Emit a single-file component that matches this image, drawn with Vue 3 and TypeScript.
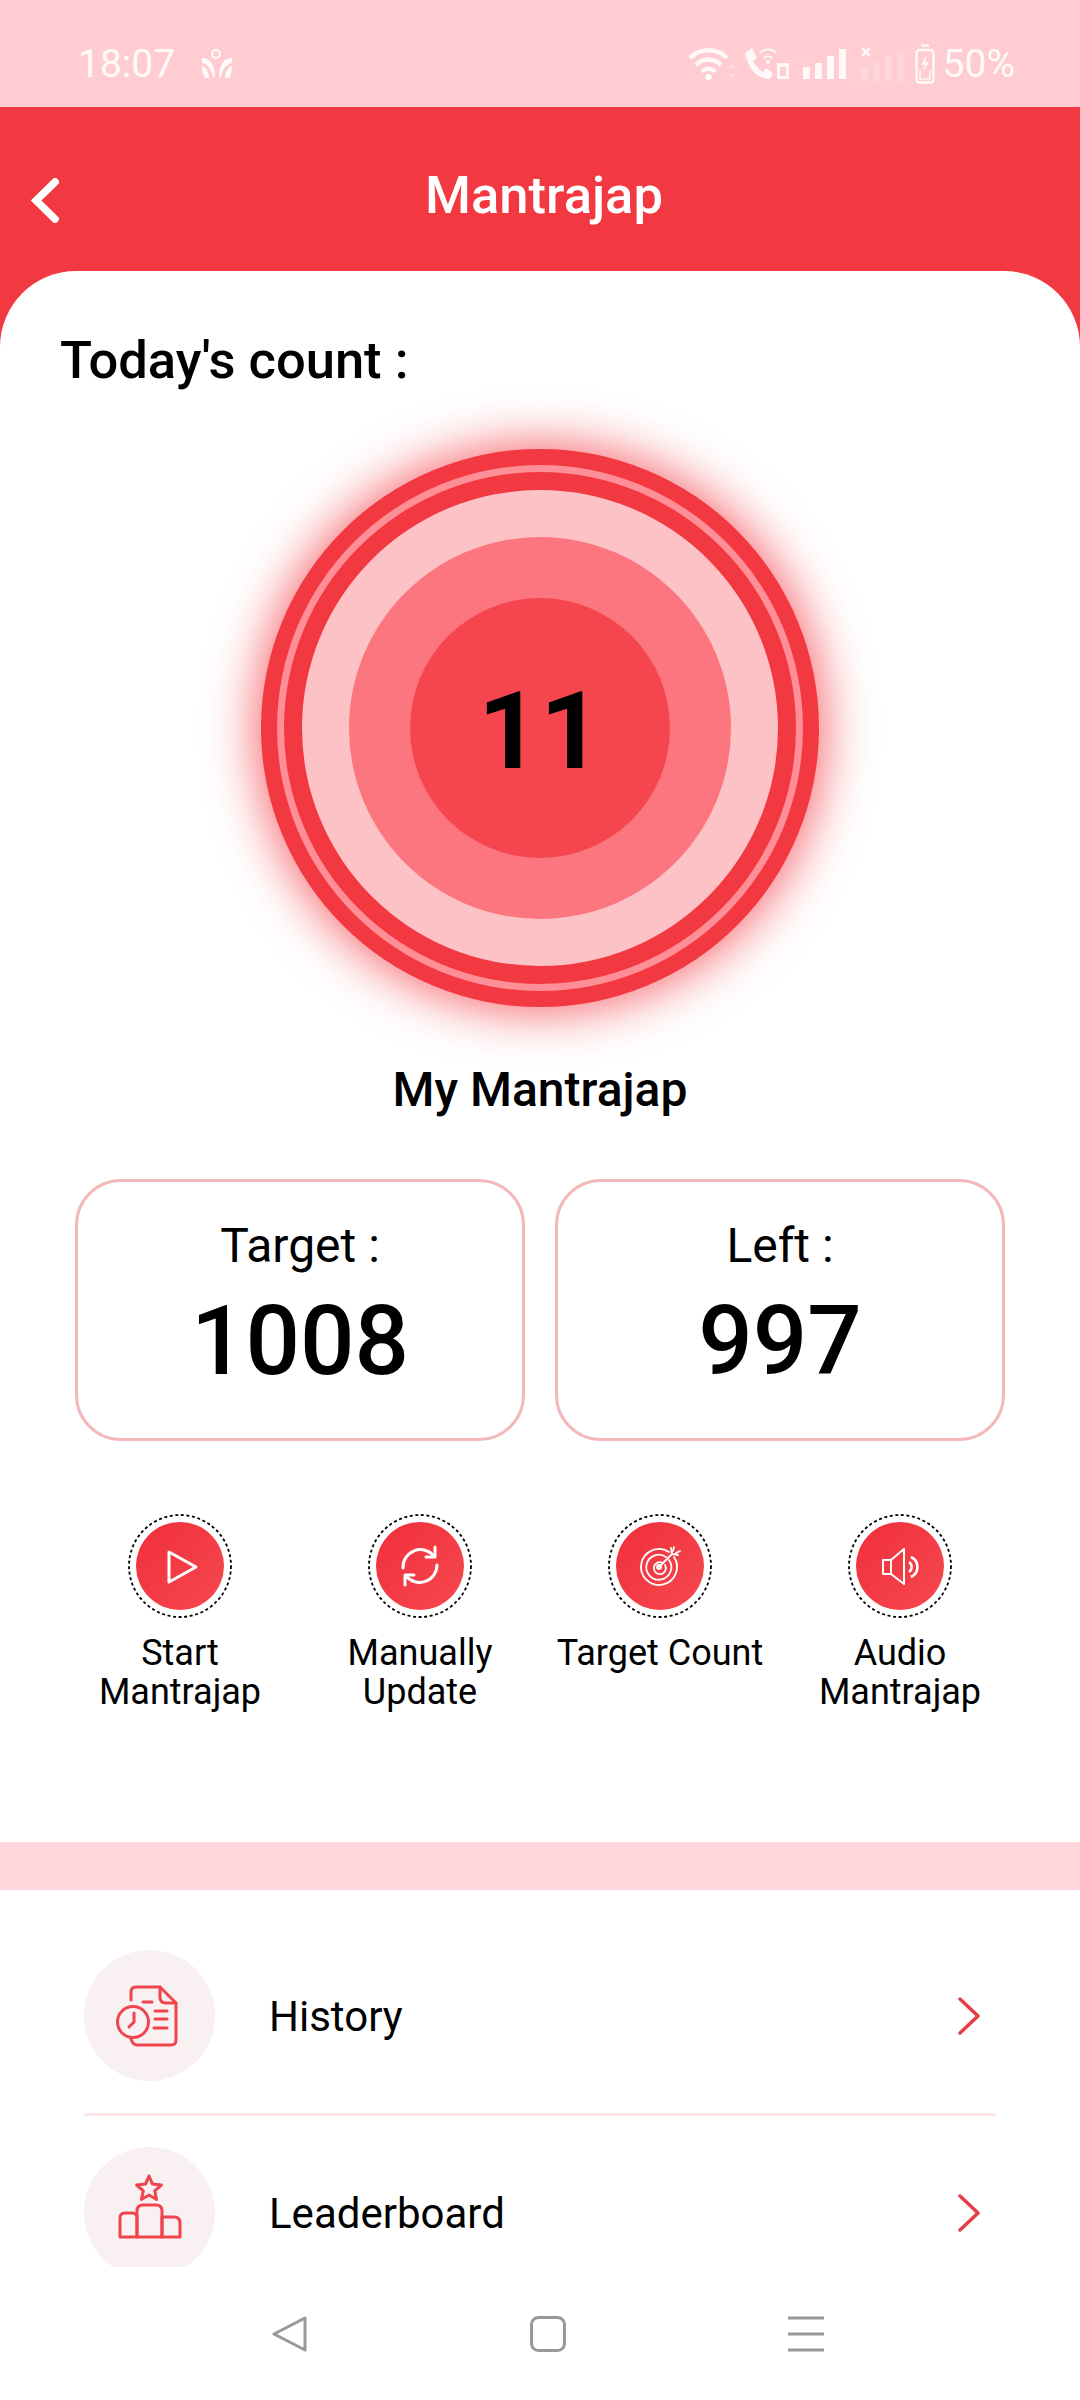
<script setup lang="ts">
const stats: { label: string; value: string }[] = [
  { label: 'Target :', value: '1008' },
  { label: 'Left :', value: '997' },
]
</script>

<template>
  <div class="page">
    <div class="status">
      <span class="time">18:07</span>
      <svg class="logo" width="30" height="29" viewBox="0 0 30 29" fill="#fff" fill-opacity=".92">
        <circle cx="14" cy="5" r="4" fill="none" stroke="#fff" stroke-opacity=".92" stroke-width="2" />
        <path d="M0 9 C8 9 13 16 13 28 H11 C10 21 6 15 0 14Z" />
        <path d="M0 17 C4 18 7 23 7 29 H3 C1 26 0 22 0 17Z" />
        <path d="M30 9 C22 9 17 16 17 28 H19 C20 21 24 15 30 14Z" />
        <path d="M30 17 C26 18 23 23 23 29 H27 C29 26 30 22 30 17Z" />
      </svg>
      <div class="status-right">
        <svg width="47" height="34" viewBox="0 0 47 34" fill="none" stroke="#fff" stroke-opacity=".85">
          <path d="M2 11 A26 26 0 0 1 39 11" stroke-width="4.500" />
          <path d="M8 18 A17 17 0 0 1 33 18" stroke-width="4.500" />
          <path d="M14 25 A8 8 0 0 1 27 25" stroke-width="4" />
          <circle cx="20.500" cy="30" r="3" fill="#fff" stroke="none" />
          <path d="M41 21 l2.500 -3 l2.500 3 M41 27 l2.500 3 l2.500 -3" stroke-width="2" stroke-opacity=".4" />
        </svg>
        <svg class="call" width="46" height="34" viewBox="0 0 46 34" fill="#fff" fill-opacity=".85">
          <path d="M1 6 L8 1 L13 11 L9 14 Q12 21 19 25 L22 21 L29 26 L26 32 Q7 32 1 6Z" />
          <g fill="none" stroke="#fff" stroke-opacity=".85" stroke-width="2">
            <path d="M16 6 A11 11 0 0 1 32 6" />
            <path d="M20 11 A6 6 0 0 1 28 11" />
          </g>
          <circle cx="24" cy="15" r="2" />
          <path fill-rule="evenodd" d="M33 16 H45 V32 H33Z M36 20 V29 H42 V20Z" />
        </svg>
        <svg class="bars" width="43" height="30" viewBox="0 0 43 30" fill="#fff" fill-opacity=".85">
          <rect x="0" y="18" width="7" height="12" />
          <rect x="12" y="14" width="7" height="16" />
          <rect x="24" y="7" width="7" height="23" />
          <rect x="36" y="0" width="7" height="30" />
        </svg>
        <svg class="bars2" width="43" height="34" viewBox="0 0 43 34" fill="#fff">
          <path d="M1 1 L9 9 M9 1 L1 9" stroke="#fff" stroke-opacity=".85" stroke-width="2.500" />
          <g fill-opacity=".22">
            <rect x="0" y="20" width="7" height="14" />
            <rect x="12" y="16" width="7" height="18" />
            <rect x="24" y="9" width="7" height="25" />
            <rect x="36" y="4" width="7" height="30" />
          </g>
        </svg>
        <svg class="batt" width="20" height="40" viewBox="0 0 20 40" fill="none" stroke="#fff" stroke-opacity=".85">
          <path d="M6 1.500 H14" stroke-width="2.500" />
          <rect x="1.500" y="6" width="17" height="32.500" rx="3" stroke-width="2.500" />
          <path d="M12 10 L6 21 H10 L8 28 L14 18 H10Z" fill="#fff" fill-opacity=".85" stroke="none" />
          <path d="M5 26 V35 H15 V26" stroke-width="1.500" />
        </svg>
        <span class="pct">50%</span>
      </div>
    </div>

    <div class="main">
      <header class="header">
        <svg class="back" width="28" height="45" viewBox="0 0 28 45" fill="none" stroke="#fff" stroke-width="7.500" stroke-linecap="square">
          <path d="M24 4 L5 22.500 L24 41" />
        </svg>
        <h1 class="title">Mantrajap</h1>
      </header>

      <section class="sheet">
        <h2 class="today">Today's count :</h2>

        <div class="dial-wrap">
          <div class="dial">
            <div class="ring-light">
              <div class="ring-red">
                <div class="disc-pale">
                  <div class="disc-mid">
                    <div class="disc-core">11</div>
                  </div>
                </div>
              </div>
            </div>
          </div>
        </div>

        <p class="subtitle">My Mantrajap</p>

        <div class="stats">
          <div v-for="s in stats" :key="s.label" class="stat">
            <span class="stat-label">{{ s.label }}</span>
            <span class="stat-value">{{ s.value }}</span>
          </div>
        </div>

        <div class="actions">
          <div class="action">
            <div class="dotted">
              <svg class="dash" width="104" height="104" viewBox="0 0 104 104" fill="none" stroke="#000" stroke-width="1.800" stroke-dasharray="3 2.600">
                <circle cx="52" cy="52" r="51" />
              </svg>
              <div class="disc">
                <svg width="88" height="88" viewBox="0 0 88 88" fill="none" stroke="#fff" stroke-width="3" stroke-linejoin="round">
                  <path d="M33 30 L60 45 L33 60Z" />
                </svg>
              </div>
            </div>
            <span class="action-label">Start<br />Mantrajap</span>
          </div>
          <div class="action">
            <div class="dotted">
              <svg class="dash" width="104" height="104" viewBox="0 0 104 104" fill="none" stroke="#000" stroke-width="1.800" stroke-dasharray="3 2.600">
                <circle cx="52" cy="52" r="51" />
              </svg>
              <div class="disc">
                <svg width="88" height="88" viewBox="0 0 88 88" fill="none" stroke="#fff" stroke-width="3" stroke-linecap="round" stroke-linejoin="round">
                  <path d="M27 46 A17.500 17.500 0 0 1 58 34" />
                  <path d="M59 25 V35 H50" />
                  <path d="M61 43 A17.500 17.500 0 0 1 30 54" />
                  <path d="M29 63 V53 H38" />
                </svg>
              </div>
            </div>
            <span class="action-label">Manually<br />Update</span>
          </div>
          <div class="action">
            <div class="dotted">
              <svg class="dash" width="104" height="104" viewBox="0 0 104 104" fill="none" stroke="#000" stroke-width="1.800" stroke-dasharray="3 2.600">
                <circle cx="52" cy="52" r="51" />
              </svg>
              <div class="disc">
                <svg width="88" height="88" viewBox="0 0 88 88" fill="none" stroke="#fff" stroke-width="1.800" stroke-linecap="round">
                  <path d="M53 30 A18 18 0 1 0 58 35" />
                  <path d="M50 35 A12.500 12.500 0 1 0 53 38" />
                  <path d="M47 41 A6 6 0 1 0 49 43" />
                  <circle cx="43" cy="45" r="2" />
                  <path d="M43 45 L56 32" stroke-width="2" />
                  <path d="M55 26 L56 32 L62 33 M58 25 L57 29 M64 29 L60 31" />
                </svg>
              </div>
            </div>
            <span class="action-label">Target Count</span>
          </div>
          <div class="action">
            <div class="dotted">
              <svg class="dash" width="104" height="104" viewBox="0 0 104 104" fill="none" stroke="#000" stroke-width="1.800" stroke-dasharray="3 2.600">
                <circle cx="52" cy="52" r="51" />
              </svg>
              <div class="disc">
                <svg width="88" height="88" viewBox="0 0 88 88" fill="none" stroke="#fff" stroke-width="2" stroke-linejoin="round">
                  <path d="M27 38 H35 V52 H27Z" />
                  <path d="M35 38 L48 27 V62 L35 52" />
                  <path d="M53 40 A6 6 0 0 1 53 50" stroke-width="2.500" />
                  <path d="M55 35 A11 11 0 0 1 55 55" stroke-width="2.500" />
                </svg>
              </div>
            </div>
            <span class="action-label">Audio<br />Mantrajap</span>
          </div>
        </div>

        <div class="band"></div>

        <div class="list">
          <div class="row">
            <div class="row-icon">
              <svg width="131" height="131" viewBox="0 0 131 131" fill="none" stroke="#f0454f" stroke-width="3" stroke-linecap="round" stroke-linejoin="round">
                <path d="M47 50 V42 Q47 37 52 37 H76 L92 53 V90 Q92 95 87 95 H53 Q49 95 47 89" />
                <path d="M76 37 V47 Q76 53 82 53 H92" />
                <circle cx="49" cy="72" r="15.500" />
                <path d="M50 63 V72 L45 77" />
                <path d="M59 52 H68 M71 61 H83 M71 69 H83 M70 78 H83" />
              </svg>
            </div>
            <span class="row-label">History</span>
            <svg class="row-arrow" width="22" height="38" viewBox="0 0 22 38" fill="none" stroke="#e53e46" stroke-width="3.500" stroke-linecap="round" stroke-linejoin="round">
              <path d="M2 2 L20 19 L2 36" />
            </svg>
          </div>
          <div class="divider"></div>
          <div class="row">
            <div class="row-icon">
              <svg width="131" height="131" viewBox="0 0 131 131" fill="none" stroke="#f0454f" stroke-width="3" stroke-linecap="round" stroke-linejoin="round">
                <path d="M65 29 L68.500 37.100 L77.400 38 L70.700 43.900 L72.600 52.500 L65 48 L57.400 52.500 L59.300 43.900 L52.600 38 L61.500 37.100Z" />
                <path d="M36 90 V71 Q36 66 41 66 H48 Q53 66 53 71 V90Z" />
                <path d="M53 90 V64 Q53 58 59 58 H72 Q78 58 78 64 V90Z" />
                <path d="M78 70 H90 Q96 70 96 76 V90 H78Z" />
              </svg>
            </div>
            <span class="row-label">Leaderboard</span>
            <svg class="row-arrow" width="22" height="38" viewBox="0 0 22 38" fill="none" stroke="#e53e46" stroke-width="3.500" stroke-linecap="round" stroke-linejoin="round">
              <path d="M2 2 L20 19 L2 36" />
            </svg>
          </div>
        </div>
      </section>
    </div>

    <nav class="nav">
      <svg width="36" height="36" viewBox="0 0 36 36" fill="none" stroke="#999" stroke-width="3" stroke-linejoin="round">
        <path d="M2 18 L33 2 V34Z" />
      </svg>
      <svg width="36" height="36" viewBox="0 0 36 36" fill="none" stroke="#999" stroke-width="3">
        <rect x="1.500" y="1.500" width="33" height="33" rx="7" />
      </svg>
      <svg width="36" height="36" viewBox="0 0 36 36" fill="none" stroke="#999" stroke-width="3">
        <path d="M0 2 H36 M0 18 H36 M0 34 H36" />
      </svg>
    </nav>
  </div>
</template>

<style>
html,
body {
  margin: 0;
  background: #fff;
}
</style>

<style scoped>
.page {
  width: 1080px;
  height: 2400px;
  display: flex;
  flex-direction: column;
  overflow: hidden;
  background: #fff;
  font-family: Roboto, "Liberation Sans", sans-serif;
  color: #000;
}
.status {
  height: 107px;
  flex: none;
  background: #ffccd1;
  display: flex;
  align-items: center;
  padding: 20px 65px 0 78px;
  box-sizing: border-box;
  color: rgba(255, 255, 255, 0.92);
}
.time {
  font-size: 39px;
  line-height: 44px;
}
.logo {
  margin-left: 27px;
}
.status-right {
  margin-left: auto;
  display: flex;
  align-items: center;
}
.call {
  margin-left: 9px;
}
.bars {
  margin-left: 13px;
}
.bars2 {
  margin-left: 15px;
}
.batt {
  margin-left: 11px;
}
.pct {
  margin-left: 8px;
  font-size: 39px;
  line-height: 44px;
}
.main {
  flex: 1;
  min-height: 0;
  background: #f23942;
  display: flex;
  flex-direction: column;
}
.header {
  height: 164px;
  flex: none;
  box-sizing: border-box;
  padding: 20px 23px 9px 31px;
  display: grid;
  grid-template-columns: 1fr auto 1fr;
  align-items: center;
}
.back {
  margin-top: 12px;
}
.title {
  margin: 0;
  color: #fff;
  font-size: 52.500px;
  line-height: 60px;
  font-weight: 500;
}
.sheet {
  flex: 1;
  min-height: 0;
  overflow: hidden;
  background: #fff;
  border-radius: 76px 76px 0 0;
}
.today {
  margin: 59px 0 0 60px;
  font-size: 52.500px;
  line-height: 60px;
  font-weight: 500;
}
.dial-wrap {
  margin-top: 59px;
  display: flex;
  justify-content: center;
}
.dial,
.ring-light,
.ring-red,
.disc-pale,
.disc-mid,
.disc-core {
  border-radius: 50%;
  display: flex;
  align-items: center;
  justify-content: center;
}
.dial {
  width: 558px;
  height: 558px;
  background: #f23942;
  box-shadow: 0 0 50px 4px rgba(243, 59, 68, 0.8);
}
.ring-light {
  width: 526px;
  height: 526px;
  background: #ff8f96;
}
.ring-red {
  width: 512px;
  height: 512px;
  background: #f23942;
}
.disc-pale {
  width: 476px;
  height: 476px;
  background: #fcc2c5;
}
.disc-mid {
  width: 382px;
  height: 382px;
  background: #fb767e;
}
.disc-core {
  width: 260px;
  height: 260px;
  box-sizing: border-box;
  padding-top: 5px;
  background: #f5464f;
  font-size: 108px;
  line-height: 1;
  font-weight: 700;
}
.subtitle {
  margin: 53px 0 0;
  text-align: center;
  font-size: 48px;
  line-height: 60px;
  font-weight: 500;
}
.stats {
  margin: 59px 75px 0;
  display: grid;
  grid-template-columns: 1fr 1fr;
  gap: 30px;
}
.stat {
  height: 262px;
  box-sizing: border-box;
  border: 3px solid #f4b8bb;
  border-radius: 46px;
  display: flex;
  flex-direction: column;
  align-items: center;
  padding-top: 36px;
}
.stat-label {
  font-size: 48px;
  line-height: 56px;
}
.stat-value {
  margin-top: 11px;
  font-size: 96px;
  line-height: 112px;
  font-weight: 500;
}
.actions {
  margin: 73px 60px 0;
  display: grid;
  grid-template-columns: repeat(4, 1fr);
  min-height: 202px;
}
.action {
  display: flex;
  flex-direction: column;
  align-items: center;
}
.dotted {
  position: relative;
  width: 104px;
  height: 104px;
  display: flex;
  align-items: center;
  justify-content: center;
}
.dash {
  position: absolute;
  inset: 0;
}
.disc {
  width: 88px;
  height: 88px;
  flex: none;
  border-radius: 50%;
  background: linear-gradient(135deg, #f12f3b, #f5484f);
  display: flex;
}
.action-label {
  margin-top: 16px;
  font-size: 36px;
  line-height: 39px;
  text-align: center;
  white-space: nowrap;
}
.band {
  margin-top: 126px;
  height: 48px;
  background: #ffd6db;
}
.list {
  margin: 60px 84px 0;
}
.row {
  display: flex;
  align-items: center;
  height: 131px;
}
.row-icon {
  width: 131px;
  height: 131px;
  border-radius: 50%;
  background: #f8f0f1;
  flex: none;
  display: flex;
}
.row-label {
  margin-left: 54px;
  margin-top: 2px;
  font-size: 42px;
  line-height: 52px;
}
.row-arrow {
  margin-left: auto;
  margin-right: 16px;
}
.divider {
  height: 3px;
  margin: 32px 0 31px;
  background: #fde5e6;
}
.nav {
  height: 133px;
  flex: none;
  background: #fff;
  display: flex;
  align-items: center;
  justify-content: center;
  gap: 222px;
  padding-left: 16px;
}
</style>
